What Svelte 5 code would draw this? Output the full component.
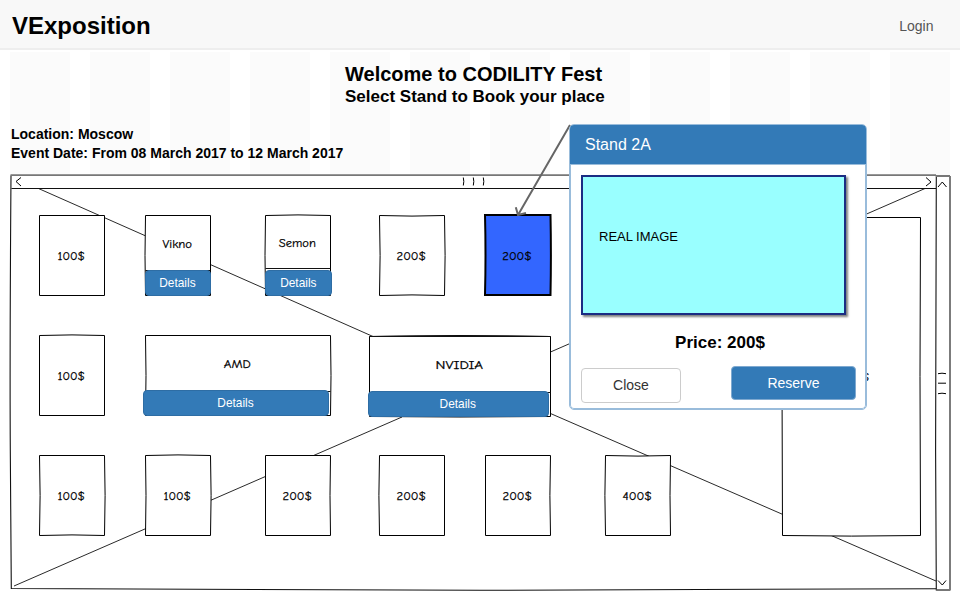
<script>
  // Page offset of the floor plan; stand coordinates are in page units.
  const top = 170;
  // bow: outward bulge of the top, right, bottom and left edges
  const stands = [
    { x: 39.5, y: 215.5, w: 65, h: 80, label: '100$', tw: 27.5, bow: [0, 0, 0, 0] },
    { x: 145.5, y: 215.5, w: 65, h: 80, label: 'Vikno', tw: 29.5, ty: 243.5, fold: 270.5, bow: [0, 0, 0, 0.5], details: [144.7, 66, 269.5] },
    { x: 265.5, y: 215.5, w: 65, h: 80, label: 'Semon', tw: 37, ty: 242.5, fold: 268.5, bow: [0.6, 0, 0, 0.5], details: [265.4, 66.4, 269.5] },
    { x: 379.5, y: 215.5, w: 65, h: 80, label: '200$', tw: 29.5, bow: [-0.6, 0.6, -0.6, -0.6] },
    { x: 485, y: 215, w: 65.5, h: 80, label: '200$', tw: 29.5, bow: [0, 0.4, 0, -0.5], selected: true },
    { x: 39.5, y: 335.5, w: 65, h: 80, label: '100$', tw: 27.5, bow: [0.6, 0, 0, 0] },
    { x: 145.5, y: 335.5, w: 185, h: 80, label: 'AMD', tw: 27, ty: 363.5, fold: 391.5, bow: [0, 0.5, 0, -0.5], details: [142.5, 186.5, 389.5] },
    { x: 369.5, y: 336.5, w: 181, h: 80, label: 'NVIDIA', tw: 47.5, ty: 364.5, fold: 392.5, bow: [1, 0, 0.5, 0], details: [367.5, 181, 390.5], doubled: true },
    { x: 39.5, y: 455.5, w: 65, h: 80, label: '100$', tw: 27.5, bow: [0, 0.6, -0.6, -0.6] },
    { x: 145.5, y: 455.5, w: 65, h: 80, label: '100$', tw: 27.5, bow: [0.6, 0.6, 0, -0.5] },
    { x: 265.5, y: 455.5, w: 65, h: 80, label: '200$', tw: 29.5, bow: [0, -0.5, 0, 0] },
    { x: 379.5, y: 455.5, w: 65, h: 80, label: '200$', tw: 29.5, bow: [0, 0, 0, 0.6] },
    { x: 485.5, y: 455.5, w: 65, h: 80, label: '200$', tw: 29.5, bow: [0, -0.6, 0, 0] },
    { x: 605.5, y: 455.5, w: 65, h: 80, label: '400$', tw: 29.5, bow: [-0.6, -0.5, 0, 0.6] },
    { x: 782.5, y: 217.5, w: 138, h: 318, label: '1000$', tw: 37.5, bow: [0, -0.5, 0.6, 0.5] }
  ];

  function outline({ x, y, w, h, bow: [t, r, b, l] }) {
    const x2 = x + w, y2 = y + h, cx = x + w / 2, cy = y + h / 2;
    return `M${x} ${y}Q${cx} ${y - 2 * t} ${x2} ${y}Q${x2 + 2 * r} ${cy} ${x2} ${y2}` +
      `Q${cx} ${y2 + 2 * b} ${x} ${y2}Q${x - 2 * l} ${cy} ${x} ${y}Z`;
  }
</script>

<div class="page">
  <header>
    <h1>VExposition</h1>
    <a class="login" href="#login">Login</a>
  </header>

  <main>
    <div class="intro">
      <h2>Welcome to CODILITY Fest</h2>
      <h3>Select Stand to Book your place</h3>
      <p>Location: Moscow</p>
      <p>Event Date: From 08 March 2017 to 12 March 2017</p>
    </div>

    <section class="floor">
      <svg class="plan" width="960" height="430" viewBox="0 170 960 430">
        <path class="sheet" d="M10.5 175H950V590H10.5Z" />
        <g class="ink">
          <path d="M11 175.5Q9.7 350 10.3 450T11.3 588.5Q250 590.3 480 590.3T936 588.7" />
          <path d="M38.5 188.5L373 336.5M550.5 413.5L936 581M14 586L402 417M550.5 352L925 188.5" stroke-width="0.9" />
          <path d="M11.5 188.5H936" />
          <path d="M936.3 176Q935.2 380 935.6 450T936.3 590H950Q950.5 380 950 176" />
        </g>
        <path class="bar" d="M10.5 175.2H936M936 176H950M936.5 590H950" />
        <path class="thin" d="M21 177.5L16 181.5L21 186M926 177.5L931 182L926 186M938 187L942.3 182L946.5 187M938 580.5L942.3 585L946 580.5" />
        <path class="grip" d="M463.3 177.5Q464.3 181.5 463.3 185.5M473.3 177.5Q474.3 181.5 473.3 185.5M483.3 177.5Q484.3 181.5 483.3 185.5M938 373.7Q942 372.7 946 373.7M938 383.2H946M938 393.7Q942 392.7 946 393.7" />
        {#each stands as s}
          <path class="stand" class:selected={s.selected} d={outline(s)} />
          {#if s.fold}
            <path class="ink" d="M{s.x} {s.fold}H{s.x + s.w}" />
          {/if}
          {#if s.doubled}
            <path class="ink" d="M{s.x} {s.y}H{s.x + s.w}M{s.x} {s.y}Q{s.x + s.w / 2} {s.y - 1.6} {s.x + s.w} {s.y}" />
          {/if}
          <text x={s.x + s.w / 2 - 0.7} y={(s.ty ?? s.y + s.h / 2) + 4.8} textLength={s.tw} lengthAdjust="spacingAndGlyphs">{s.label}</text>
        {/each}
      </svg>

      {#each stands.filter((s) => s.details) as s}
        <button class="details" style="left:{s.details[0]}px;top:{s.details[2] - top}px;width:{s.details[1]}px">Details</button>
      {/each}

      <svg class="pointer" width="70" height="100" viewBox="505 120 70 100">
        <path d="M570 125L518 215M515.8 207.3L518 215L526 213" />
      </svg>

      <article class="popup">
        <div class="title">Stand 2A</div>
        <div class="body">
          <div class="image">REAL IMAGE</div>
          <strong>Price: 200$</strong>
          <div class="actions">
            <button class="close">Close</button>
            <button class="reserve">Reserve</button>
          </div>
        </div>
      </article>
    </section>
  </main>
</div>

<style>
  :global(body) { background: #fff; overflow: hidden; }
  .page {
    width: 960px;
    height: 600px;
    overflow: hidden;
    font-family: "Liberation Sans", Arial, sans-serif;
    color: #000;
  }
  h1, h2, h3, p { margin: 0; }
  button { font-family: inherit; padding: 0; box-sizing: border-box; }
  header {
    box-sizing: border-box;
    height: 50px;
    display: flex;
    align-items: center;
    justify-content: space-between;
    padding: 4px 26.5px 0 12px;
    background: #f8f8f8;
    border-bottom: 2px solid #eee;
  }
  h1 { font-size: 24px; line-height: 28px; }
  .login { font-size: 14px; color: #555; text-decoration: none; }
  main { padding-top: 2px; }
  .intro {
    box-sizing: border-box;
    height: 118px;
    margin: 0 10px;
    padding: 10px 0 0 1px;
    background: repeating-linear-gradient(90deg, #fbfbfb 0 60px, #fff 60px 80px);
  }
  h2 { font-size: 20px; line-height: 24px; padding-left: 334px; }
  h3 { font-size: 17px; line-height: 20px; padding: 1px 0 0 334px; }
  p { font-size: 14px; line-height: 19px; font-weight: bold; }
  h3 + p { margin-top: 18px; }
  .floor {
    position: relative;
    height: 430px;
    background: repeating-linear-gradient(90deg, #fff 0 10px, #fbfbfb 10px 70px, #fff 70px 80px) 0 0 / 960px 5px no-repeat;
  }
  .plan { display: block; }
  .sheet { fill: #fff; }
  .ink { fill: none; stroke: #111; stroke-width: 1.1; }
  .bar { fill: none; stroke: #777; stroke-width: 1.8; }
  .thin { fill: none; stroke: #000; stroke-width: 1; }
  .grip { fill: none; stroke: #000; stroke-width: 1; }
  .stand { fill: #fff; stroke: #000; stroke-width: 1; }
  .stand.selected { fill: #36f; stroke-width: 2; }
  text {
    font: 500 12.3px "Comic Sans MS", "Comic Neue", "Open Sans", sans-serif;
    text-anchor: middle;
    fill: #000;
    stroke: #000;
    stroke-width: 0.25px;
  }
  .details {
    position: absolute;
    height: 26.5px;
    border: 1px solid #2e6da4;
    border-radius: 4px;
    background: #337ab7;
    color: #fff;
    font-size: 11.9px;
    padding-right: 0.5px;
  }
  .pointer { position: absolute; left: 505px; top: -50px; }
  .pointer path { fill: none; stroke: #666; stroke-width: 2; }
  .popup {
    position: absolute;
    left: 569px;
    top: -46px;
    width: 298px;
    height: 286px;
    box-sizing: border-box;
    display: flex;
    flex-direction: column;
    border: 1px solid #99bcdb;
    border-radius: 5px;
    background: #fff;
    overflow: hidden;
  }
  .title {
    height: 39px;
    line-height: 39px;
    padding-left: 15px;
    background: #337ab7;
    border-bottom: 1px solid #99bcdb;
    color: #fff;
    font-size: 16px;
  }
  .body {
    flex: 1;
    display: flex;
    flex-direction: column;
    border: 1px solid #99bcdb;
    border-top: 0;
    border-radius: 0 0 4px 4px;
    padding: 10px 9px 0 10px;
  }
  .image {
    box-sizing: border-box;
    width: 265px;
    height: 140px;
    border: 2px solid #1b2c83;
    background: #9ff;
    box-shadow: 2px 2px 2px rgba(0, 0, 0, 0.5);
    padding-left: 16px;
    line-height: 119px;
    font-size: 13px;
  }
  strong { font-size: 17px; line-height: 20px; margin-top: 18px; padding-left: 3px; text-align: center; }
  .actions { display: flex; justify-content: space-between; align-items: flex-start; margin-top: 13px; }
  .actions button { font-size: 14px; border-radius: 4px; }
  .close { width: 100px; height: 35px; margin-top: 2px; padding-bottom: 2px; background: #fff; border: 1px solid #ccc; color: #333; }
  .reserve { width: 125px; height: 34px; background: #337ab7; border: 1px solid #7fa9d0; color: #fff; }
</style>
